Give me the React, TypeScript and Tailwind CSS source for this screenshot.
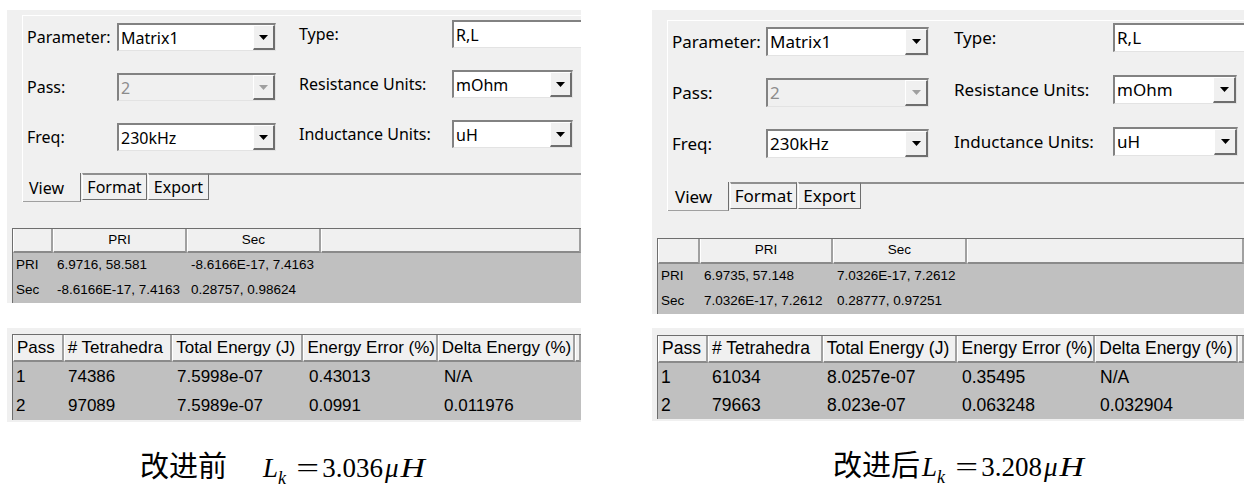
import React from "react";

const ui = "font-['Noto_Sans',sans-serif]";
const grid = "font-['Liberation_Sans',Arial,sans-serif]";

function Arrow({ disabled }: { disabled?: boolean }) {
  return (
    <svg width="9" height="5" viewBox="0 0 9 5">
      <polygon points="0,0 9,0 4.5,5" fill={disabled ? "#a0a0a0" : "#000"} />
    </svg>
  );
}

function Combo({
  value,
  className,
  btn,
  disabled,
  noArrow,
}: {
  value: string;
  className: string;
  btn: string;
  disabled?: boolean;
  noArrow?: boolean;
}) {
  return (
    <div
      className={`flex items-stretch border-t-2 border-l-2 border-t-[#828282] border-l-[#828282] border-b border-r border-b-[#e3e3e3] border-r-[#e3e3e3] ${
        disabled ? "bg-[#f0f0f0]" : "bg-white"
      } ${className}`}
    >
      <div
        className={`flex-1 flex items-center pl-[2px] whitespace-nowrap overflow-hidden ${
          disabled ? "text-[#8c8c8c]" : "text-black"
        }`}
      >
        {value}
      </div>
      {!noArrow && (
        <div
          className={`flex items-center justify-center bg-[#f0f0f0] border-t border-l border-white border-r-2 border-b-2 border-r-[#6e6e6e] border-b-[#6e6e6e] ${btn}`}
        >
          <Arrow disabled={disabled} />
        </div>
      )}
    </div>
  );
}

function Tabs({ sizes, text }: { sizes: string[]; text: string }) {
  return (
    <div className={`flex items-start ${text}`}>
      <div className={`flex items-end pb-[1px] border-r border-r-[#6e6e6e] border-b border-b-[#a0a0a0] ${sizes[0]}`}>
        View
      </div>
      <div className={`ml-[1px] flex items-center justify-center border-t-2 border-t-[#8f8f8f] border-l border-l-white border-r border-b border-r-[#6e6e6e] border-b-[#6e6e6e] ${sizes[1]}`}>
        Format
      </div>
      <div className={`ml-[1px] flex items-center justify-center border-t-2 border-t-[#8f8f8f] border-l border-l-white border-r border-b border-r-[#6e6e6e] border-b-[#6e6e6e] ${sizes[2]}`}>
        Export
      </div>
      <div className="flex-1 border-t-2 border-t-[#8f8f8f]" />
    </div>
  );
}

function Head({ label, className, center }: { label: string; className: string; center?: boolean }) {
  return (
    <div
      className={`flex items-center bg-[#f0f0f0] border-l border-l-white border-r-2 border-r-[#a0a0a0] border-b-2 border-b-[#8a8a8a] whitespace-nowrap overflow-hidden ${
        center ? "justify-center" : "pl-[3px]"
      } ${className}`}
    >
      {label}
    </div>
  );
}

function Cell({ v, className }: { v: string; className: string }) {
  return <div className={`flex items-center pl-[4px] whitespace-nowrap ${className}`}>{v}</div>;
}

function MatrixTable({
  cols,
  headH,
  rowH,
  rows,
  text,
}: {
  cols: string[];
  headH: string;
  rowH: string;
  rows: string[][];
  text: string;
}) {
  return (
    <div className="bg-[#f0f0f0] pl-[5px]">
      <div className={`border-t border-l border-[#6e6e6e] bg-[#c0c0c0] ${grid} ${text} text-black`}>
        <div className={`flex ${headH}`}>
          <Head label="" className={cols[0]} center />
          <Head label="PRI" className={cols[1]} center />
          <Head label="Sec" className={cols[2]} center />
          <Head label="" className="flex-1 border-r-0" center />
        </div>
        {rows.map((r) => (
          <div key={r[0]} className={`flex ${rowH}`}>
            <Cell v={r[0]} className={`${cols[0]} !pl-[3px]`} />
            <Cell v={r[1]} className={cols[1]} />
            <Cell v={r[2]} className={cols[2]} />
          </div>
        ))}
      </div>
    </div>
  );
}

function PassTable({
  cols,
  headH,
  rowH,
  rows,
  text,
  pad,
}: {
  cols: string[];
  headH: string;
  rowH: string;
  rows: string[][];
  text: string;
  pad: string;
}) {
  const heads = ["Pass", "# Tetrahedra", "Total Energy (J)", "Energy Error (%)", "Delta Energy (%)"];
  return (
    <div className={`bg-[#f0f0f0] pl-[5px] ${pad}`}>
      <div className={`border-t border-l border-[#6e6e6e] bg-[#c0c0c0] ${grid} ${text} text-black`}>
        <div className={`flex ${headH}`}>
          {heads.map((h, i) => (
            <Head key={h} label={h} className={cols[i]} />
          ))}
          <Head label="" className="flex-1 border-r-0" />
        </div>
        {rows.map((r) => (
          <div key={r[0]} className={`flex ${rowH}`}>
            {r.map((v, i) => (
              <Cell key={i} v={v} className={`${cols[i]} ${i === 0 ? "!pl-[3px]" : ""}`} />
            ))}
          </div>
        ))}
      </div>
    </div>
  );
}

function Formula({ value }: { value: string }) {
  return (
    <span className="font-['Liberation_Serif','Times_New_Roman',serif] text-[27px] text-black">
      <span className="italic">L</span>
      <span className="italic text-[18px] relative top-[7px]">k</span>
      <span className="inline-block scale-x-150 ml-[14px] mr-[7px]">=</span>
      <span>{value}</span>
      <span className="italic ml-[2px]">μ</span>
      <span className="inline-block italic scale-x-125 ml-[4px] mr-[3px]">H</span>
    </span>
  );
}

export default function App() {
  return (
    <div className="w-[1250px] h-[500px] bg-white flex items-start overflow-hidden">
      {/* before */}
      <div className="ml-[7px] mt-[10px] w-[574px] flex flex-col">
        <div className={`bg-[#f0f0f0] pt-[5px] pl-[15px] pb-[26px] overflow-hidden ${ui} text-[16px] text-black`}>
          <div className="border-t border-l border-white">
            <div className="flex">
              <div className="w-[276px] shrink-0 pl-[4px] pt-[7px] flex flex-col gap-[22px]">
                <div className="flex items-center h-[28px]">
                  <span className="w-[90px]">Parameter:</span>
                  <Combo value="Matrix1" className="w-[159px] h-[28px]" btn="w-[22px]" />
                </div>
                <div className="flex items-center h-[28px]">
                  <span className="w-[90px]">Pass:</span>
                  <Combo value="2" className="w-[159px] h-[28px]" btn="w-[22px]" disabled />
                </div>
                <div className="flex items-center h-[28px]">
                  <span className="w-[90px]">Freq:</span>
                  <Combo value="230kHz" className="w-[159px] h-[28px]" btn="w-[22px]" />
                </div>
              </div>
              <div className="flex-1 pt-[4px] flex flex-col gap-[22px]">
                <div className="flex items-center h-[28px]">
                  <span className="w-[153px] shrink-0">Type:</span>
                  <Combo value="R,L" className="w-[140px] shrink-0 h-[28px]" btn="" noArrow />
                </div>
                <div className="flex items-center h-[28px]">
                  <span className="w-[153px] shrink-0">Resistance Units:</span>
                  <Combo value="mOhm" className="w-[121px] h-[28px]" btn="w-[22px]" />
                </div>
                <div className="flex items-center h-[28px]">
                  <span className="w-[153px] shrink-0">Inductance Units:</span>
                  <Combo value="uH" className="w-[121px] h-[28px]" btn="w-[22px]" />
                </div>
              </div>
            </div>
            <div className="mt-[22px]">
              <Tabs
                text="text-[16px]"
                sizes={["w-[58px] h-[29px] pl-[6px]", "w-[65px] h-[27px]", "w-[61px] h-[27px]"]}
              />
            </div>
          </div>
        </div>
        <MatrixTable
          cols={["w-[40px]", "w-[134px]", "w-[134px]"]}
          headH="h-[24px]"
          rowH="h-[25px]"
          text="text-[13.5px]"
          rows={[
            ["PRI", "6.9716, 58.581", "-8.6166E-17, 7.4163"],
            ["Sec", "-8.6166E-17, 7.4163", "0.28757, 0.98624"],
          ]}
        />
        <div className="mt-[25px]">
          <PassTable
            pad="pt-[6px] pb-[2px]"
            cols={["w-[51px]", "w-[109px]", "w-[132px]", "w-[135px]", "w-[138px]"]}
            headH="h-[27px]"
            rowH="h-[29px]"
            text="text-[17px]"
            rows={[
              ["1", "74386", "7.5998e-07", "0.43013", "N/A"],
              ["2", "97089", "7.5989e-07", "0.0991", "0.011976"],
            ]}
          />
        </div>
        <div className="mt-[24px] ml-[133px] flex items-baseline whitespace-nowrap">
          <span className="font-['Noto_Sans_CJK_SC',sans-serif] text-[29px] leading-[36px] text-black">改进前</span>
          <span className="ml-[36px]">
            <Formula value="3.036" />
          </span>
        </div>
      </div>

      {/* after */}
      <div className="ml-[71px] mt-[10px] w-[592px] flex flex-col">
        <div className={`bg-[#f0f0f0] pt-[10px] pl-[15px] pb-[27px] overflow-hidden ${ui} text-[17px] text-black`}>
          <div className="border-t border-l border-white">
            <div className="flex">
              <div className="w-[286px] shrink-0 pl-[4px] pt-[6px] flex flex-col gap-[22px]">
                <div className="flex items-center h-[29px]">
                  <span className="w-[94px]">Parameter:</span>
                  <Combo value="Matrix1" className="w-[163px] h-[29px]" btn="w-[23px]" />
                </div>
                <div className="flex items-center h-[29px]">
                  <span className="w-[94px]">Pass:</span>
                  <Combo value="2" className="w-[163px] h-[29px]" btn="w-[23px]" disabled />
                </div>
                <div className="flex items-center h-[29px]">
                  <span className="w-[94px]">Freq:</span>
                  <Combo value="230kHz" className="w-[163px] h-[29px]" btn="w-[23px]" />
                </div>
              </div>
              <div className="flex-1 pt-[2px] flex flex-col gap-[23px]">
                <div className="flex items-center h-[29px]">
                  <span className="w-[159px] shrink-0">Type:</span>
                  <Combo value="R,L" className="w-[140px] shrink-0 h-[29px]" btn="" noArrow />
                </div>
                <div className="flex items-center h-[29px]">
                  <span className="w-[159px] shrink-0">Resistance Units:</span>
                  <Combo value="mOhm" className="w-[124px] h-[29px]" btn="w-[23px]" />
                </div>
                <div className="flex items-center h-[29px]">
                  <span className="w-[159px] shrink-0">Inductance Units:</span>
                  <Combo value="uH" className="w-[125px] h-[29px]" btn="w-[23px]" />
                </div>
              </div>
            </div>
            <div className="mt-[24px]">
              <Tabs
                text="text-[17px]"
                sizes={["w-[61px] h-[29px] pl-[7px]", "w-[67px] h-[27px]", "w-[63px] h-[27px]"]}
              />
            </div>
          </div>
        </div>
        <MatrixTable
          cols={["w-[42px]", "w-[133px]", "w-[134px]"]}
          headH="h-[25px]"
          rowH="h-[25px]"
          text="text-[13.5px]"
          rows={[
            ["PRI", "6.9735, 57.148", "7.0326E-17, 7.2612"],
            ["Sec", "7.0326E-17, 7.2612", "0.28777, 0.97251"],
          ]}
        />
        <div className="mt-[14px]">
          <PassTable
            pad="pt-[7px] pb-[2px]"
            cols={["w-[50px]", "w-[115px]", "w-[135px]", "w-[138px]", "w-[143px]"]}
            headH="h-[27px]"
            rowH="h-[28px]"
            text="text-[17.5px]"
            rows={[
              ["1", "61034", "8.0257e-07", "0.35495", "N/A"],
              ["2", "79663", "8.023e-07", "0.063248", "0.032904"],
            ]}
          />
        </div>
        <div className="mt-[24px] ml-[181px] flex items-baseline whitespace-nowrap">
          <span className="font-['Noto_Sans_CJK_SC',sans-serif] text-[29px] leading-[36px] text-black">改进后</span>
          <span className="ml-[2px]">
            <Formula value="3.208" />
          </span>
        </div>
      </div>
    </div>
  );
}
